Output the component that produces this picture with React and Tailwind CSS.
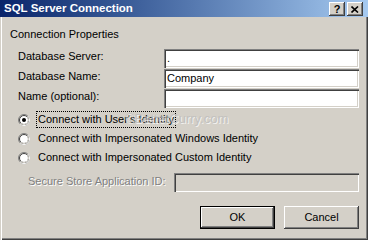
const sunken =
  'shadow-[inset_1px_1px_0_#808080,inset_2px_2px_0_#404040,inset_-1px_-1px_0_#ffffff,inset_-2px_-2px_0_#d4d0c8]';
const raised =
  'shadow-[inset_-1px_-1px_0_#404040,inset_1px_1px_0_#ffffff,inset_-2px_-2px_0_#808080]';

const Radio = ({ checked }) => (
  <svg width="12" height="12" viewBox="0 0 12 12" className="shrink-0">
    <circle cx="6" cy="6" r="5.5" fill="none" stroke="#808080" />
    <path d="M9.89 2.11 A5.5 5.5 0 0 1 2.11 9.89" fill="none" stroke="#ffffff" />
    <circle cx="6" cy="6" r="4.5" fill="#ffffff" stroke="#404040" />
    <path d="M9.18 2.82 A4.5 4.5 0 0 1 2.82 9.18" fill="none" stroke="#d4d0c8" />
    {checked && <circle cx="6" cy="6" r="2" fill="#000000" />}
  </svg>
);

const Field = ({ label, value }) => (
  <div className="flex h-[19px] items-start pl-[8px]">
    <span className="flex-1 leading-[13px] mt-[1px]">{label}</span>
    <div className={`w-[195px] h-[19px] bg-white ${sunken} pl-[3px] pt-[3px] leading-[13px]`}>
      {value}
    </div>
  </div>
);

const RadioRow = ({ label, checked, focused }) => (
  <div className="flex h-[19px] items-center pl-[8px] gap-[6px]">
    <Radio checked={checked} />
    <span
      className={`leading-[13px] px-[1px] py-[1px] border border-dotted ${
        focused ? 'border-black' : 'border-transparent'
      }`}
    >
      {label}
    </span>
  </div>
);

export default function App() {
  return (
    <div className="relative w-[368px] h-[240px] flex flex-col bg-[#d4d0c8] text-[11px] text-black font-['Liberation_Sans',Arial,sans-serif] overflow-hidden">
      {/* title bar */}
      <div className="h-[17px] flex items-center pl-[4px] pr-[5px] bg-gradient-to-r from-[#0a246a] to-[#a6caf0]">
        <span className="flex-1 text-white font-bold text-[11.5px] leading-none">SQL Server Connection</span>
        <div className="flex gap-[2px] mt-[1px]">
          <div className={`w-[16px] h-[14px] bg-[#d4d0c8] ${raised} flex items-center justify-center font-bold text-[11px] leading-none`}>
            ?
          </div>
          <div className={`w-[16px] h-[14px] bg-[#d4d0c8] ${raised} flex items-center justify-center`}>
            <svg width="8" height="7" viewBox="0 0 8 7">
              <path d="M0.5 0.5 L7 6.5 M7 0.5 L0.5 6.5" stroke="#000" strokeWidth="1.6" />
            </svg>
          </div>
        </div>
      </div>

      {/* body */}
      <div className="flex-1 flex flex-col pl-[10px] pr-[9px] pt-[11px] shadow-[inset_1px_0_0_#d4d0c8,inset_2px_0_0_#ffffff,inset_-1px_-1px_0_#404040,inset_-2px_-2px_0_#808080]">
        <div className="leading-[13px]">Connection Properties</div>

        <div className="flex flex-col gap-[1px] mt-[8px]">
          <Field label="Database Server:" value="." />
          <Field label="Database Name:" value="Company" />
          <Field label="Name (optional):" value="" />
        </div>

        <div className="flex flex-col mt-[2px]">
          <RadioRow label="Connect with User's Identity" checked focused />
          <RadioRow label="Connect with Impersonated Windows Identity" />
          <RadioRow label="Connect with Impersonated Custom Identity" />
        </div>

        <div className="flex h-[19px] items-start mt-[6px] pl-[18px]">
          <span className="flex-1 leading-[13px] mt-[2px] text-[#808080] [text-shadow:1px_1px_0_#ffffff]">
            Secure Store Application ID:
          </span>
          <div className={`w-[185px] h-[19px] bg-[#d4d0c8] ${sunken}`} />
        </div>

        <div className="flex justify-end gap-[9px] mt-[14px]">
          <button className="w-[75px] h-[23px] border border-black bg-[#d4d0c8] shadow-[inset_-1px_-1px_0_#404040,inset_1px_1px_0_#ffffff,inset_-2px_-2px_0_#808080] leading-none">
            OK
          </button>
          <button className={`w-[75px] h-[23px] bg-[#d4d0c8] ${raised} leading-none`}>Cancel</button>
        </div>
      </div>

      {/* watermark */}
      <div className="absolute left-[125px] top-[112px] text-[13px] leading-none text-[#bcbcbc] opacity-70 [text-shadow:1px_1px_0_#ffffff]">
        ©BetterCurry.com
      </div>
    </div>
  );
}
